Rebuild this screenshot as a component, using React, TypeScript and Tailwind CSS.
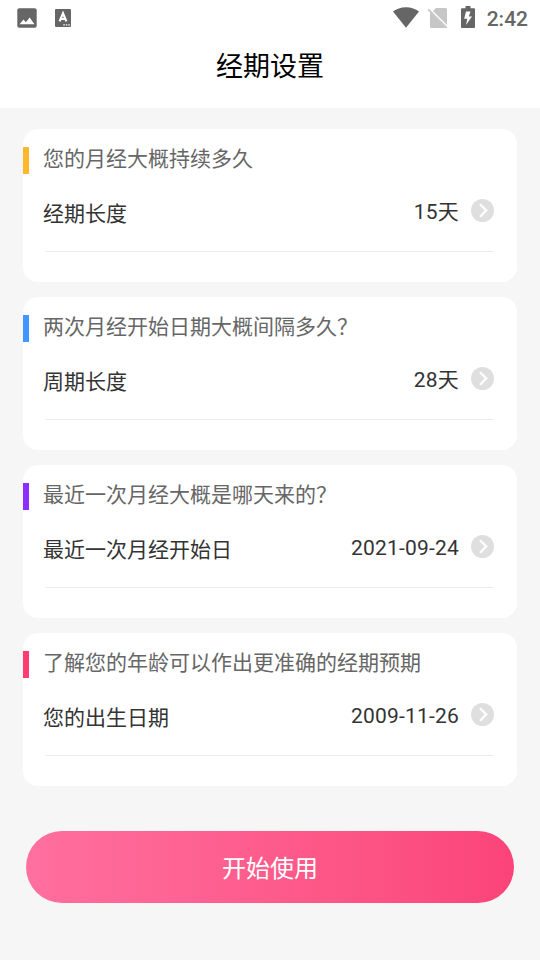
interface SettingCardProps {
  question: string;
  label: string;
  value: string;
  accent: string;
}

const settings: SettingCardProps[] = [
  { question: '您的月经大概持续多久', label: '经期长度', value: '15天', accent: 'bg-[#ffb82e]' },
  { question: '两次月经开始日期大概间隔多久？', label: '周期长度', value: '28天', accent: 'bg-[#4196ff]' },
  { question: '最近一次月经大概是哪天来的？', label: '最近一次月经开始日', value: '2021-09-24', accent: 'bg-[#8c2eff]' },
  { question: '了解您的年龄可以作出更准确的经期预期', label: '您的出生日期', value: '2009-11-26', accent: 'bg-[#ff3b70]' },
];

function StatusBar() {
  return (
    <div className="flex h-9 items-center justify-between pl-[17px] pr-3 text-[#666]">
      <div className="flex items-center gap-[18px]">
        <svg width="20" height="20" viewBox="0 0 20 20">
          <rect x="0.3" y="0.3" width="19.4" height="19.4" rx="2" fill="currentColor" />
          <path d="M2.6 16.2l3.9-4.8 2.4 2.9 3.8-4.8 4.7 6.7z" fill="#fff" />
        </svg>
        <svg width="16" height="18" viewBox="0 0 16 18">
          <rect width="16" height="18" rx="1" fill="currentColor" />
          <path d="M4.6 12.4L8 4.4l3.4 8M5.8 10h4.4" fill="none" stroke="#fff" strokeWidth="2.2" />
          <path d="M8.3 15.2h1.5v1.3H8.3zM10.8 15.2h1.5v1.3h-1.5zM13.3 15.2h1.5v1.3h-1.5z" fill="#fff" />
        </svg>
      </div>
      <div className="flex items-center">
        <svg className="mb-0.5" width="26" height="21" viewBox="0 0 26 21">
          <path d="M0 4.6C3.4 1.8 7.8.2 13 .2s9.6 1.6 13 4.4L13 20.8z" fill="currentColor" />
        </svg>
        <svg className="ml-2 mb-px" width="22" height="22" viewBox="0 0 22 22">
          <path d="M9 1h9.5A1.5 1.5 0 0 1 20 2.5V18L6 4z" fill="#c6c6c6" />
          <path d="M3 5L18.5 21h-14A1.5 1.5 0 0 1 3 19.5z" fill="#c6c6c6" />
          <path d="M1.2 2.3L19.6 20.9" stroke="#c6c6c6" strokeWidth="1.9" />
        </svg>
        <svg className="ml-3 mb-0.5" width="14" height="22" viewBox="0 0 14 22">
          <path d="M4.5 0h5v2.2H13a1 1 0 0 1 1 1V21a1 1 0 0 1-1 1H1a1 1 0 0 1-1-1V3.2a1 1 0 0 1 1-1h3.5z" fill="currentColor" />
          <path d="M9.5 5.5H5l-1.8 7.3h3.1L5 19l6-8.4H7.8z" fill="#fff" />
        </svg>
        <span className="ml-3 pt-0.5 font-[Roboto] text-[21px] leading-6 font-medium">2:42</span>
      </div>
    </div>
  );
}

function ArrowBadge() {
  return (
    <svg width="23" height="23" viewBox="0 0 23 23">
      <circle cx="11.5" cy="11.5" r="11.5" fill="#dfdfdf" />
      <path d="M9.7 6l5.5 5.5L9.7 17" fill="none" stroke="#fff" strokeWidth="2.4" strokeLinecap="round" />
    </svg>
  );
}

function SettingCard({ question, label, value, accent }: SettingCardProps) {
  return (
    <section className="h-[153px] rounded-[15px] bg-white pt-[18px]">
      <div className="flex h-[27px] items-center">
        <span className={`h-[27px] w-1.5 ${accent}`} />
        <h2 className="ml-3.5 pb-[3px] text-[21px] leading-6 whitespace-nowrap text-[#666]">{question}</h2>
      </div>
      <div className="mr-[23px] ml-5 flex h-[73px] items-center">
        <span className="flex-1 pt-1.5 text-[21px] leading-6 text-[#333]">{label}</span>
        <span className="mr-3 pt-0.5 text-[21px] leading-6 tracking-[0.2px] text-[#333]">{value}</span>
        <ArrowBadge />
      </div>
      <div className="mt-1 mr-[23px] ml-[23px] h-px bg-[#ebebeb]" />
    </section>
  );
}

export default function App() {
  return (
    <div className="h-[960px] w-[540px] overflow-hidden bg-[#f6f6f6] font-[Roboto,'Noto_Sans_CJK_SC',sans-serif]">
      <header className="h-[108px] bg-white">
        <StatusBar />
        <h1 className="pt-[13px] text-center text-[27px] leading-9 text-black">经期设置</h1>
      </header>
      <main className="flex flex-col gap-[15px] px-[23px] pt-[21px]">
        {settings.map((item) => (
          <SettingCard key={item.label} {...item} />
        ))}
      </main>
      <div className="px-[26px] pt-[45px]">
        <button className="h-[72px] w-full rounded-full bg-linear-to-r from-[#ff6f9f] to-[#fb4479] pt-[3px] text-2xl text-white">
          开始使用
        </button>
      </div>
    </div>
  );
}
